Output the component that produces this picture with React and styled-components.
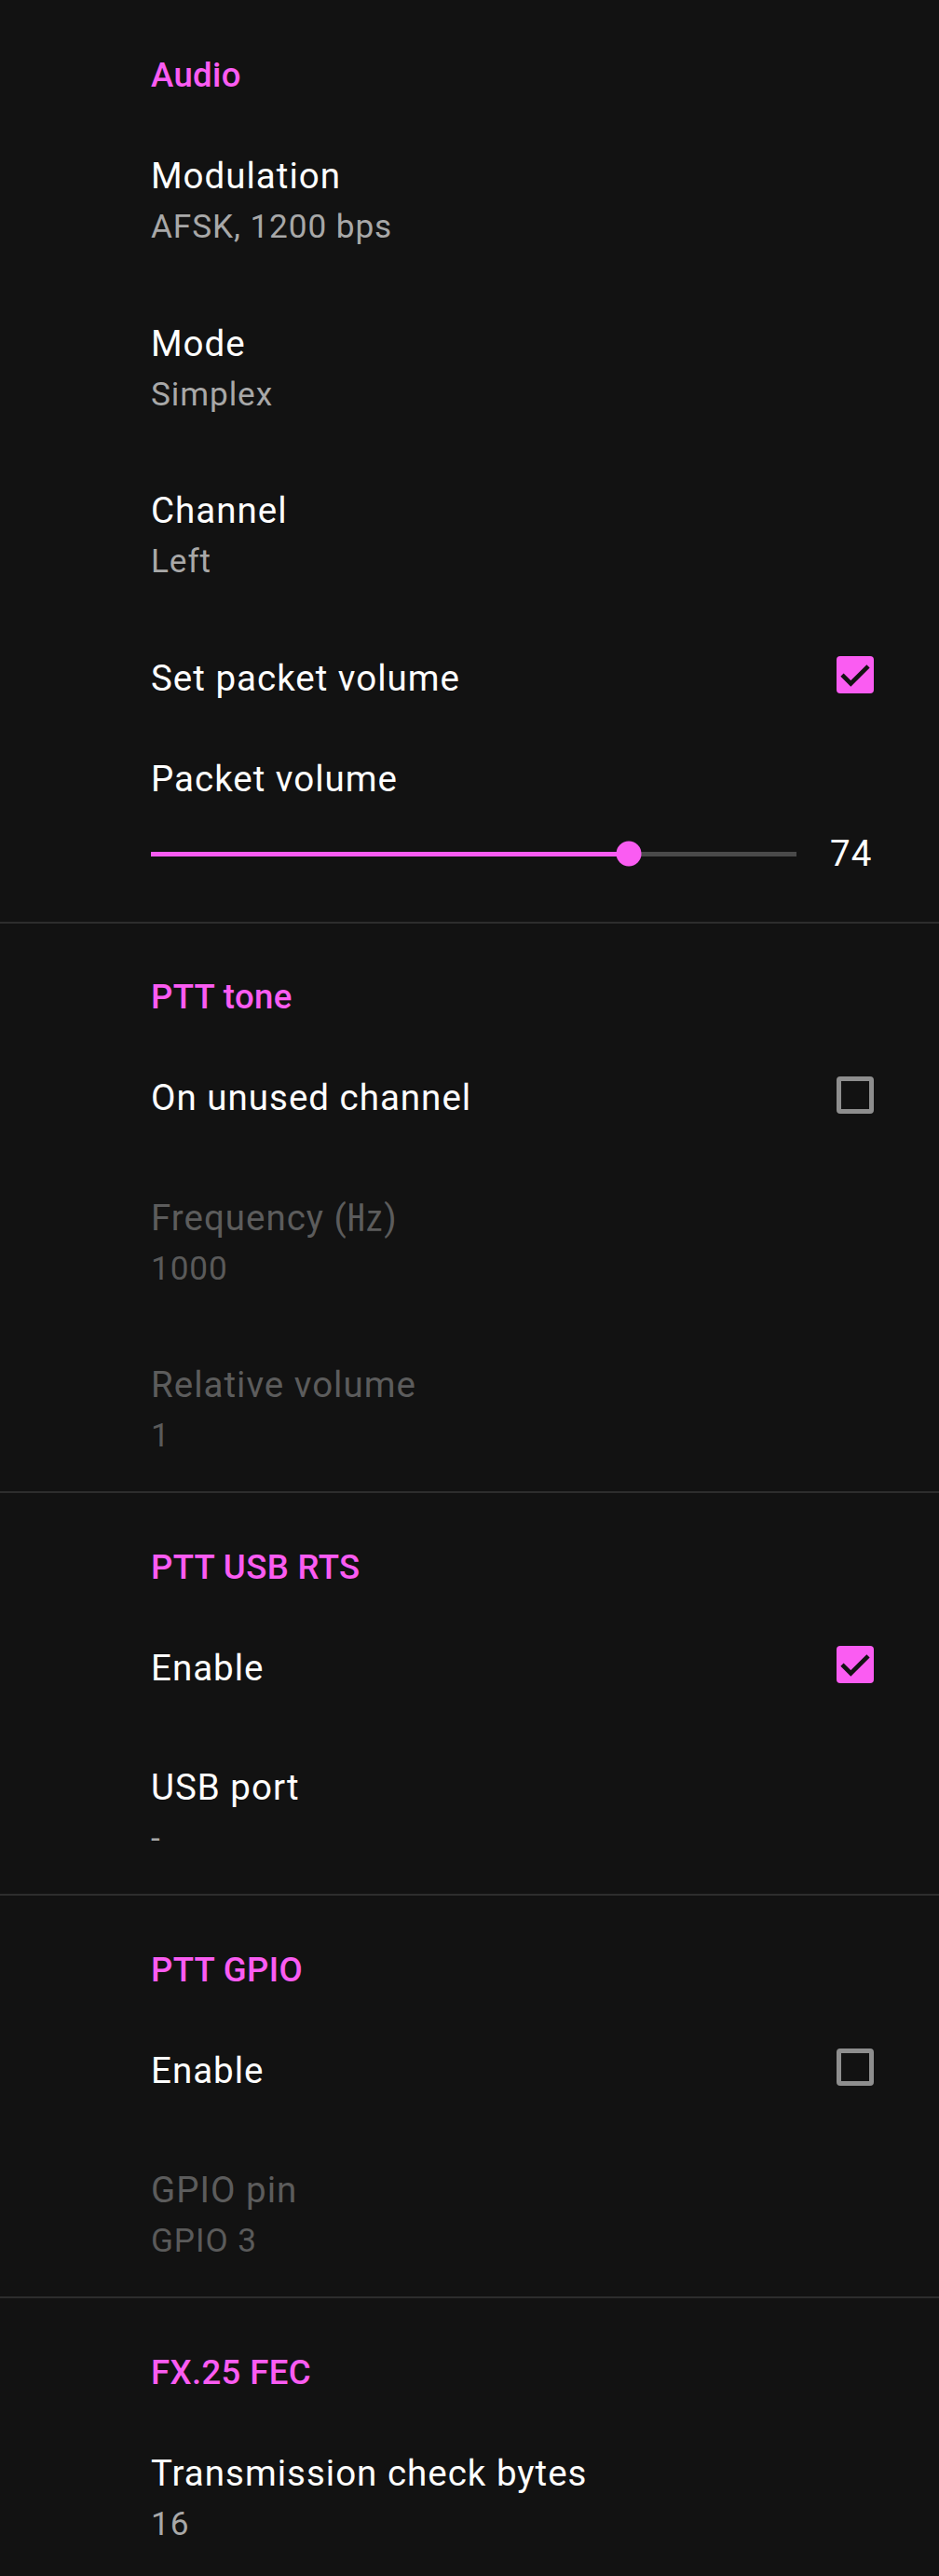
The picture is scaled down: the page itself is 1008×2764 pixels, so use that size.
import React from "react";
import styled, { createGlobalStyle } from "styled-components";

const PINK = "#fa5cf2";

const GlobalStyle = createGlobalStyle`
  html, body {
    margin: 0;
    padding: 0;
    background: #121212;
  }
  body {
    font-family: Roboto, "Noto Sans", "Noto Sans CJK SC", sans-serif;
    -webkit-font-smoothing: antialiased;
  }
`;

const settings = [
    {
        title: "Audio",
        items: [
            { type: "text", title: "Modulation", summary: "AFSK, 1200 bps" },
            { type: "text", title: "Mode", summary: "Simplex" },
            { type: "text", title: "Channel", summary: "Left" },
            { type: "check", title: "Set packet volume", checked: true },
            { type: "slider", title: "Packet volume", value: 74 },
        ],
    },
    {
        title: "PTT tone",
        items: [
            { type: "check", title: "On unused channel", checked: false },
            { type: "text", title: "Frequency (\u3390)", summary: "1000", disabled: true },
            { type: "text", title: "Relative volume", summary: "1", disabled: true },
        ],
    },
    {
        title: "PTT USB RTS",
        items: [
            { type: "check", title: "Enable", checked: true },
            { type: "text", title: "USB port", summary: "-" },
        ],
    },
    {
        title: "PTT GPIO",
        items: [
            { type: "check", title: "Enable", checked: false },
            { type: "text", title: "GPIO pin", summary: "GPIO 3", disabled: true },
        ],
    },
    {
        title: "FX.25 FEC",
        items: [
            { type: "text", title: "Transmission check bytes", summary: "16" },
        ],
    },
];

export default function App() {
    return (
        <Page>
            <GlobalStyle />
            {settings.map((section, i) => (
                <Section key={section.title} $first={i === 0}>
                    <Header>{section.title}</Header>
                    {section.items.map((item, j) => {
                        if (item.type === "check") {
                            return (
                                <CheckItem key={j}>
                                    <Title>{item.title}</Title>
                                    <Checkbox checked={item.checked} />
                                </CheckItem>
                            );
                        }
                        if (item.type === "slider") {
                            return (
                                <SliderItem key={j}>
                                    <Title>{item.title}</Title>
                                    <SliderRow>
                                        <Track>
                                            <Fill style={{ width: item.value + "%" }} />
                                            <Thumb style={{ left: item.value + "%" }} />
                                        </Track>
                                        <Value>{item.value}</Value>
                                    </SliderRow>
                                </SliderItem>
                            );
                        }
                        return (
                            <TextItem key={j}>
                                <Title $disabled={item.disabled}>{item.title}</Title>
                                <Summary $disabled={item.disabled}>{item.summary}</Summary>
                            </TextItem>
                        );
                    })}
                </Section>
            ))}
        </Page>
    );
}

const Checkbox = ({ checked }) => (
    <Box $checked={checked}>
        {checked ? (
            <svg width="40" height="40" viewBox="0 0 40 40">
                <path
                    d="M6 20.2 L15.3 29.4 L34 10.8"
                    fill="none"
                    stroke="#121212"
                    strokeWidth="4.6"
                />
            </svg>
        ) : null}
    </Box>
);

const Page = styled.div`
  background: #121212;
  width: 1008px;
  min-height: 2764px;
`;

const Section = styled.section`
  border-top: 2px solid ${(p) => (p.$first ? "transparent" : "#2d2d2d")};
`;

const Header = styled.div`
  padding: 55.3px 70px 18.7px 162px;
  font-size: 36.6px;
  font-weight: 500;
  letter-spacing: 0.35px;
  line-height: 48px;
  color: ${PINK};
`;

const TextItem = styled.div`
  padding: 39.5px 70px 32px 162px;
`;

const Title = styled.div`
  font-size: 38.5px;
  letter-spacing: 1px;
  line-height: 52px;
  color: ${(p) => (p.$disabled ? "#5c5c5c" : "#ffffff")};
  flex: 1;
`;

const Summary = styled.div`
  font-size: 35.2px;
  letter-spacing: 0.9px;
  line-height: 56px;
  color: ${(p) => (p.$disabled ? "#5a5a5a" : "#a8a8a8")};
`;

const CheckItem = styled.div`
  display: flex;
  align-items: flex-start;
  box-sizing: border-box;
  height: 128.5px;
  padding: 39.5px 70px 0 162px;
`;

const Box = styled.div`
  box-sizing: border-box;
  width: 40px;
  height: 40px;
  margin-top: 2.5px;
  border-radius: 4px;
  background: ${(p) => (p.$checked ? PINK : "transparent")};
  border: ${(p) => (p.$checked ? "none" : "5px solid #8e8e8e")};
  svg {
    display: block;
  }
`;

const SliderItem = styled.div`
  padding: 19.5px 70px 52.5px 162px;
`;

const SliderRow = styled.div`
  display: flex;
  align-items: center;
  height: 40px;
  margin-top: 34px;
`;

const Track = styled.div`
  position: relative;
  flex: 1;
  height: 5px;
  background: #4a4a4a;
`;

const Fill = styled.div`
  position: absolute;
  left: 0;
  top: 0;
  bottom: 0;
  background: ${PINK};
`;

const Thumb = styled.div`
  position: absolute;
  top: 50%;
  width: 27px;
  height: 27px;
  border-radius: 50%;
  background: ${PINK};
  transform: translate(-50%, -50%);
`;

const Value = styled.div`
  width: 47px;
  margin-left: 36px;
  font-size: 38.5px;
  letter-spacing: 1px;
  line-height: 40px;
  color: #ffffff;
`;
